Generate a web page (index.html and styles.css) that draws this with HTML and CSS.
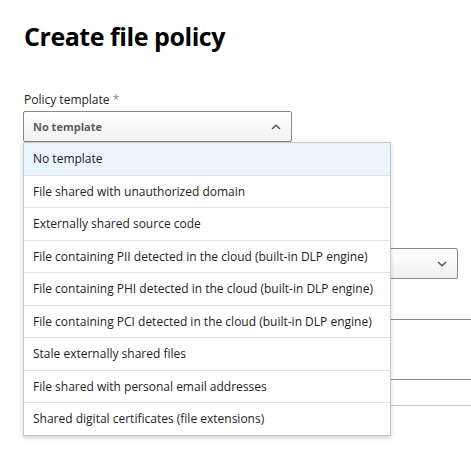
FILE: index.html
```html
<!DOCTYPE html>
<html lang="en">
<head>
<meta charset="utf-8">
<title>Create file policy</title>
<link rel="stylesheet" href="styles.css">
</head>
<body>
<div class="page">
  <h1 class="title">Create file policy</h1>
  <div class="field">
    <div class="label">Policy template <span class="req">*</span></div>
    <div class="combo">
      <div class="select open">
        <span class="select-text">No template</span>
        <svg class="chev" width="10" height="6" viewBox="0 0 10 6"><path d="M1 5L5 1.2L9 5" fill="none" stroke="#555" stroke-width="1.5"/></svg>
      </div>
      <ul class="menu">
        <li class="item selected">No template</li>
        <li class="item">File shared with unauthorized domain</li>
        <li class="item">Externally shared source code</li>
        <li class="item">File containing PII detected in the cloud (built-in DLP engine)</li>
        <li class="item">File containing PHI detected in the cloud (built-in DLP engine)</li>
        <li class="item">File containing PCI detected in the cloud (built-in DLP engine)</li>
        <li class="item">Stale externally shared files</li>
        <li class="item">File shared with personal email addresses</li>
        <li class="item">Shared digital certificates (file extensions)</li>
      </ul>
    </div>
  </div>
  <div class="bg-select">
    <svg class="chev" width="10" height="6" viewBox="0 0 10 6"><path d="M1 1L5 4.8L9 1" fill="none" stroke="#555" stroke-width="1.5"/></svg>
  </div>
  <div class="bg-line line1"></div>
  <div class="bg-line line2"></div>
  <div class="bg-line line3"></div>
</div>
</body>
</html>
```
FILE: styles.css
```css
html, body {
  margin: 0;
  padding: 0;
  background: #fff;
}
body {
  font-family: "Open Sans", "Noto Sans", sans-serif;
  color: #323130;
  min-height: 450px;
}
.page {
  padding: 18px 0 40px 23px;
}
.title {
  margin: 0 0 0 1px;
  font-size: 25px;
  font-weight: 700;
  line-height: 36px;
  color: #000;
  letter-spacing: -0.45px;
}
.field {
  margin-top: 38px;
}
.label {
  font-size: 12px;
  line-height: 16px;
  margin-left: 1px;
  margin-bottom: 3px;
  color: #201f1e;
}
.req {
  color: #8a8886;
}
.combo {
  position: relative;
  width: 269px;
}
.select {
  height: 29px;
  border: 1px solid #8a8886;
  border-radius: 2px;
  background: linear-gradient(#ffffff, #f1f1f1);
  display: flex;
  align-items: center;
  justify-content: space-between;
  padding: 0 10px 0 9px;
}
.select-text {
  font-size: 11px;
  font-weight: 700;
  color: #605e5c;
}
.menu {
  position: absolute;
  top: 31px;
  left: 0;
  width: 366px;
  margin: 0;
  padding: 0;
  list-style: none;
  background: #fff;
  border: 1px solid #c8c8c8;
  box-shadow: 0 2px 4px rgba(0,0,0,0.18);
  z-index: 2;
}
.item {
  height: 31.5px;
  line-height: 31.5px;
  padding-left: 9px;
  font-size: 12px;
  color: #201f1e;
  border-bottom: 1px solid #e1e1e1;
  white-space: nowrap;
}
.item:last-child {
  border-bottom: none;
}
.item.selected {
  background: #eaf4fd;
}
.bg-select {
  margin-top: 106px;
  width: 423px;
  height: 29px;
  border: 1px solid #8a8886;
  border-radius: 2px;
  background: linear-gradient(#ffffff, #f1f1f1);
  display: flex;
  align-items: center;
  justify-content: flex-end;
  padding-right: 10px;
}
.bg-line {
  height: 0;
}
.line1 {
  margin-top: 40px;
  border-top: 1px solid #8a8886;
}
.line2 {
  margin-top: 59px;
  border-top: 1px solid #8a8886;
}
.line3 {
  margin-top: 25px;
  border-top: 1px solid #c8c6c4;
}
```
